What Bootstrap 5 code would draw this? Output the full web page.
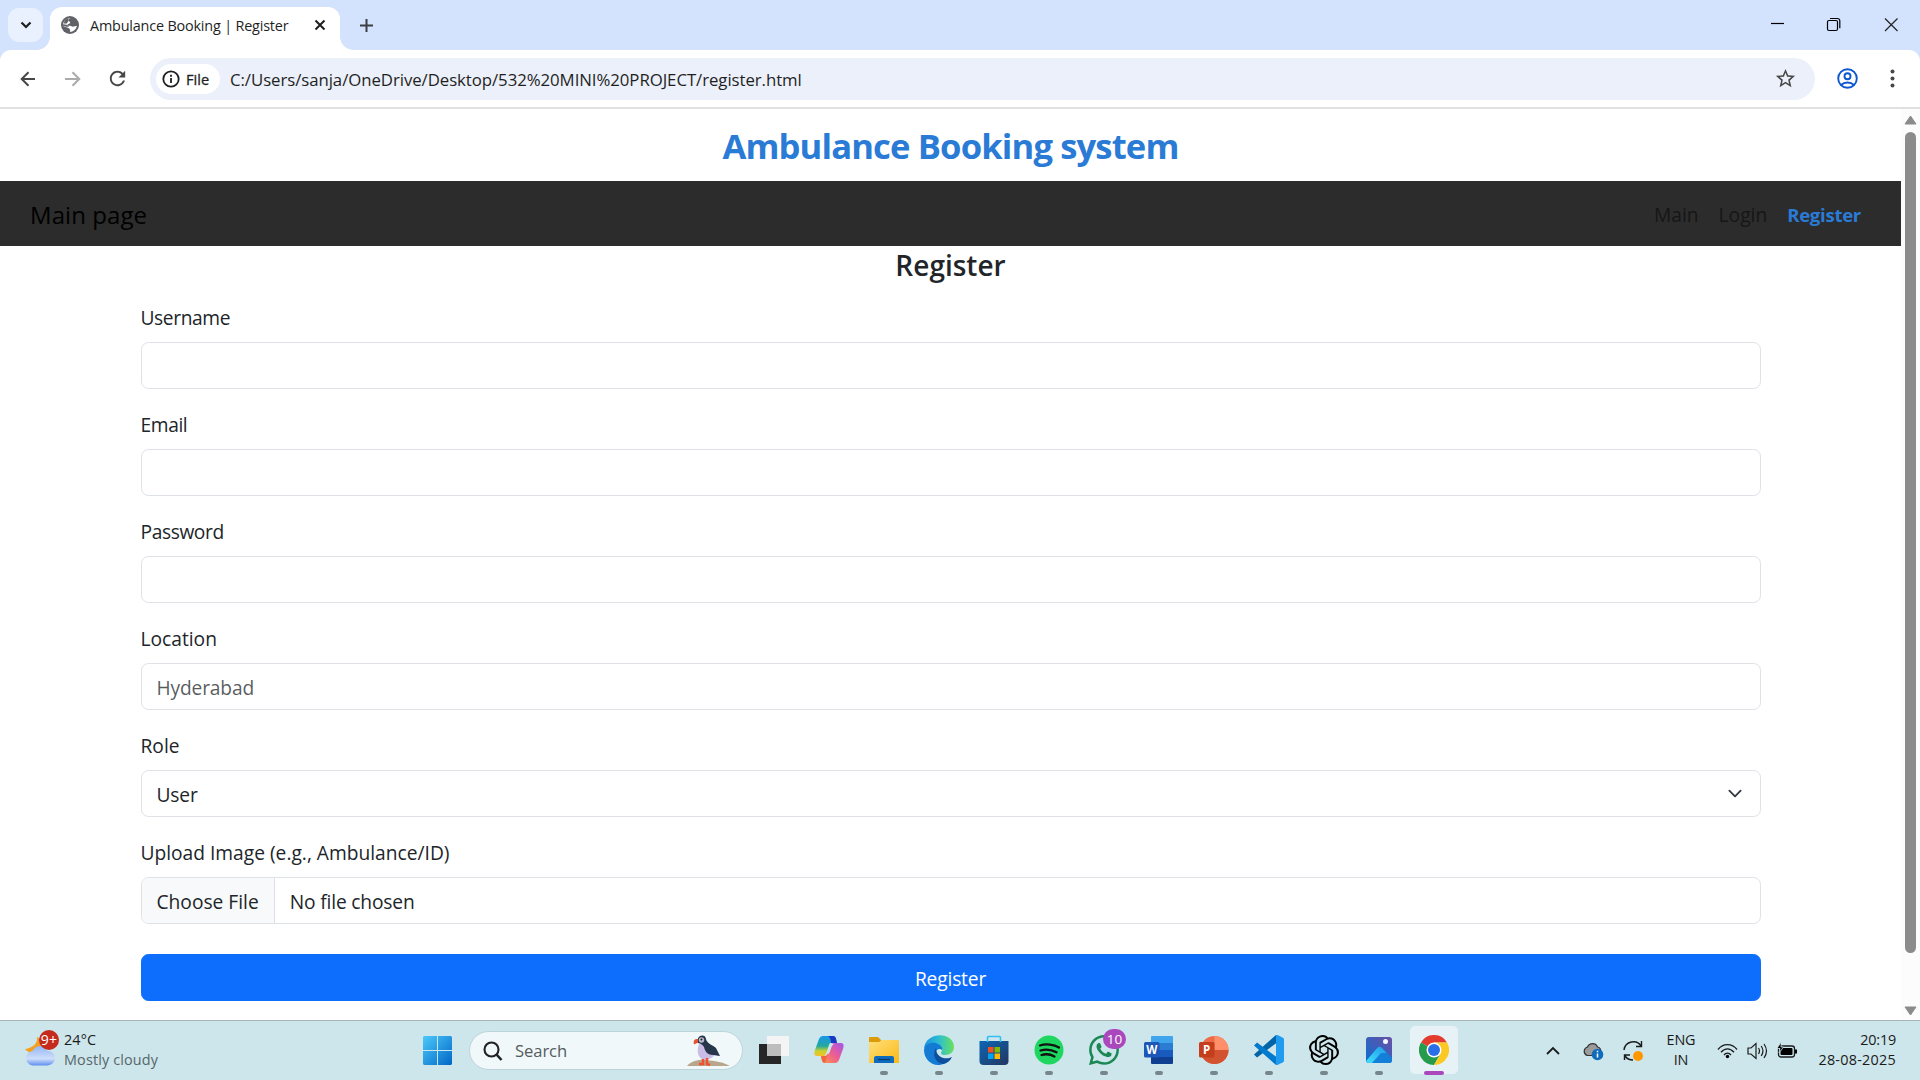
<!DOCTYPE html>
<html lang="en">
<head>
<meta charset="utf-8">
<meta name="viewport" content="width=device-width, initial-scale=1">
<title>Ambulance Booking | Register</title>
<link href="https://cdn.jsdelivr.net/npm/bootstrap@5.3.0/dist/css/bootstrap.min.css" rel="stylesheet">
<style>
html{font-size:20px}
body{font-family:"Open Sans","Noto Sans",sans-serif;font-size:19.2px;line-height:30px;width:1920px;height:1080px;overflow:hidden;background:#fff;color:#212529}
svg{display:block;flex:none}
/* browser tab strip */
.tabstrip{height:50px;background:#d3e2fd}
.tabmenu{width:35px;height:34px;margin:8px 0 0 8px;border-radius:11px;background:#e9f0fe}
.tab-active{position:relative;width:290px;height:43px;margin:7px 0 0 7px;border-radius:12px 12px 0 0;background:#fff;font-size:14.4px;line-height:37px;letter-spacing:-.18px;color:#1f1f1f}
.tab-active::before,.tab-active::after{content:"";position:absolute;bottom:0;width:13px;height:13px}
.tab-active::before{left:-13px;background:radial-gradient(circle at 0 0,transparent 12.5px,#fff 13px)}
.tab-active::after{right:-13px;background:radial-gradient(circle at 100% 0,transparent 12.5px,#fff 13px)}
.tab-active .favicon{margin:9px 11px 0 11px}
.tab-close{margin:12px 14px 0 0}
.tab-new{margin:19px 0 0 19.5px}
.winbuttons{margin-right:22px}
.toolbar-wrap{background:#d3e2fd}
.toolbar{height:59px;background:#fff;border-radius:11px 11px 0 0;border-bottom:2px solid #e0e0e0}
.nav-back{margin-left:20px}
.nav-forward{margin-left:29px}
.nav-reload{margin-left:25px}
.profile{margin:0 32px 0 22px}
.omnibox{width:1665px;height:42px;border-radius:21px;background:#ebf0fa;margin-left:21px;padding:0 18px 0 6px}
.filechip{width:64px;height:30px;border-radius:15px;background:#fff;font-size:14.6px;font-weight:500;color:#1f1f1f;padding-left:6px;gap:6px;-webkit-text-stroke:.3px #1f1f1f}
.url{font-size:16.8px;letter-spacing:-.06px;color:#1f1f1f;margin-left:10px;padding-top:2px}
/* page */
.viewport{height:911px}
.doc{width:1901px}
.pagetitle{height:72px;line-height:74px;font-size:34.6px;letter-spacing:-.85px;font-weight:700;color:#2a7bd6;margin:0;text-align:center}
.mainnav{height:65px;background:#2c2c2c;padding:2px 30px 0}
.mainnav .navbar-brand{font-size:24px;letter-spacing:.08px;color:#000;padding:0;margin:0}
.mainnav .nav-link{color:#161616;padding:0 10px;font-size:19.2px;letter-spacing:0}
.mainnav .nav-link.active{color:#2a7bd6;font-weight:700;font-size:18.6px;letter-spacing:-.3px}
.formwrap{width:1650px;max-width:none}
.formtitle{font-size:28px;line-height:36px;font-weight:600;letter-spacing:0;margin:1px 0 19px;text-align:center}
.form-label{display:block;line-height:32px;margin-bottom:8px;letter-spacing:-.4px}
.form-label.wide{letter-spacing:0}
.form-control,.form-select,.btn{font-size:19.2px;line-height:30px;height:47px;padding-top:8.5px;padding-bottom:6.5px;border-radius:7.5px;letter-spacing:-.16px}
.form-control::file-selector-button{padding-top:8.5px;padding-bottom:6.5px;margin-top:-8.5px;margin-bottom:-6.5px}
.form-select{background-size:20px 15px}
.upload{margin-bottom:30px}
.scroller{width:19px;background:#fcfcfc;padding:6px 0 4px}
.thumb{width:11px;height:821px;border-radius:6px;background:#8b8b8b;margin-top:7px}
/* taskbar */
.taskbar{height:60px;border-top:1px solid #a6b4ba;background:#cde6eb;font-size:14.4px;line-height:20px;color:#1b1b1b}
.weather{width:410px;padding:0 0 2px 25px;letter-spacing:.14px}
.weather .sky{color:#56656a}
.startbtn{margin-left:13px}
.app{position:relative;width:55px;height:59px;padding-top:14px}
.app::after{content:"";width:8px;height:4px;border-radius:2px;background:#76868a;position:absolute;left:23.5px;bottom:5px}
.app.idle::after{display:none}
.app.current::before{content:"";position:absolute;left:3.5px;top:5px;width:48px;height:48px;border-radius:5px;background:#e7f2f7}
.app.current::after{width:20px;left:17.5px;background:#ab47bc}
.app svg{position:relative}
.app .badged{margin:-8px -10px 0 0}
.searchbox{flex:none;width:274px;height:39px;border-radius:20px;background:#f0f8fa;border:1px solid #bdd3da;margin:0 3px 0 17px;padding:0 12px 0 13px;font-size:16.6px;letter-spacing:-.08px;color:#555c60}
.searchbox span{margin-left:12px}
.tray{margin-right:24px}
.t-cloud{margin-left:22px}
.t-sync{margin-left:19px}
.t-lang{margin-left:22px;width:30px;letter-spacing:-.15px}
.t-wifi{margin-left:21px}
.t-icon{margin-left:9px}
.t-clock{margin-left:16px;width:82px}
.t-clock .hm{letter-spacing:-.2px}
.t-clock .dmy{letter-spacing:.25px}
.t-lang,.t-clock{padding-bottom:1px}
</style>
</head>
<body class="d-flex flex-column">
<header>
  <div class="tabstrip d-flex">
    <div class="tabmenu d-flex align-items-center justify-content-center"><svg width="14" height="14" viewBox="0 0 14 14"><path d="M2.500 4.500 7 9l4.500-4.500" fill="none" stroke="#1f1f1f" stroke-width="2.200"/></svg></div>
    <div class="tab-active d-flex"><svg class="favicon" width="18" height="18" viewBox="0 0 18 18"><circle cx="9" cy="9" r="9" fill="#5f6368"/><path d="M9.500 2c-1.300.8-2.300 1.300-2.300 2.400 0 1.200 2 .8 2 2 0 1.400-2 1-2.600 2.100-.4 1 .8 1.200 2.200 1.200 1.600 0 1.900 1 3.200 1 1.300 0 2-.6 3.900-.6-.9 3.500-3.900 5.900-7 6 .2-1.700.6-2.300-.5-3.300C6.800 11.300 4.300 11 2 10 1.500 6 5 2 9.500 2z" fill="#fff"/><path d="M2 8.200c2.400.2 4.800.2 6 2.100-.9 1.100-3.300.1-5.900-.3zM7.500 2 4 4 2.500 7.500h3.300L7 5.500z" fill="#5f6368"/></svg><span>Ambulance Booking | Register</span>
      <svg class="tab-close ms-auto" width="12" height="12" viewBox="0 0 12 12"><path d="m1.500 1.500 9 9m0-9-9 9" stroke="#1f1f1f" stroke-width="2"/></svg></div>
    <svg class="tab-new" width="13" height="13" viewBox="0 0 13 13"><path d="M6.500 0v13M0 6.500h13" stroke="#3c3f43" stroke-width="2"/></svg>
    <div class="winbuttons ms-auto"><svg width="128" height="40" viewBox="0 0 128 40"><path d="M1 23.500h13" stroke="#000" stroke-width="1.200"/><rect x="57.500" y="20.500" width="10" height="10" rx="1.500" fill="none" stroke="#000" stroke-width="1.200"/><path d="M60 18.500h7.500a2.300 2.300 0 0 1 2.300 2.300v7.500" fill="none" stroke="#000" stroke-width="1.200"/><path d="m115 18.500 12.500 12.500m0-12.500L115 31" stroke="#222" stroke-width="1.200"/></svg></div>
  </div>
  <div class="toolbar-wrap"><div class="toolbar d-flex align-items-center">
    <svg class="nav-back" width="16" height="16" viewBox="0 0 16 16"><path d="M15 8H2M8.500 1.200 1.700 8l6.800 6.800" fill="none" stroke="#474747" stroke-width="2"/></svg>
    <svg class="nav-forward" width="16" height="16" viewBox="0 0 16 16"><path d="M0 8h14M7.500 1.200 14.300 8l-6.800 6.800" fill="none" stroke="#ababab" stroke-width="2"/></svg>
    <svg class="nav-reload" width="23" height="23" viewBox="0 0 24 24"><path fill="#474747" d="M17.650 6.350C16.200 4.900 14.210 4 12 4c-4.420 0-7.990 3.580-7.990 8s3.570 8 7.990 8c3.730 0 6.840-2.550 7.730-6h-2.080c-.82 2.330-3.040 4-5.650 4-3.310 0-6-2.690-6-6s2.690-6 6-6c1.660 0 3.140.69 4.220 1.780L13 11h7V4l-2.350 2.350z"/></svg>
    <div class="omnibox d-flex align-items-center">
      <div class="filechip d-flex align-items-center"><svg width="18" height="18" viewBox="0 0 18 18"><circle cx="9" cy="9" r="7.700" fill="none" stroke="#1f1f1f" stroke-width="1.800"/><path d="M9 8v5M9 4.800v1.900" stroke="#1f1f1f" stroke-width="1.800"/></svg><span>File</span></div>
      <span class="url">C:/Users/sanja/OneDrive/Desktop/532%20MINI%20PROJECT/register.html</span>
      <svg class="ms-auto" width="23" height="23" viewBox="0 0 24 24"><path fill="#474747" d="M22 9.240l-7.190-.62L12 2 9.190 8.630 2 9.240l5.460 4.730L5.820 21 12 17.270 18.180 21l-1.630-7.030L22 9.240zM12 15.400l-3.760 2.270 1-4.280-3.320-2.880 4.380-.38L12 6.100l1.710 4.040 4.380.38-3.320 2.880 1 4.280L12 15.400z"/></svg>
    </div>
    <svg class="profile" width="21" height="21" viewBox="0 0 21 21" fill="none" stroke="#0b57d0" stroke-width="1.900"><circle cx="10.500" cy="10.500" r="9.300"/><circle cx="10.500" cy="8.300" r="3"/><path d="M4 17c3.500-3.300 9.500-3.300 13 0"/></svg>
    <svg width="5" height="19" viewBox="0 0 5 19" fill="#474747"><circle cx="2.500" cy="2.500" r="2"/><circle cx="2.500" cy="9.500" r="2"/><circle cx="2.500" cy="16.500" r="2"/></svg>
  </div></div>
</header>
<div class="viewport d-flex">
  <main class="doc">
    <h1 class="pagetitle">Ambulance Booking system</h1>
    <nav class="mainnav d-flex align-items-center justify-content-between">
      <a class="navbar-brand" href="#">Main page</a>
      <ul class="nav"><li><a class="nav-link" href="#">Main</a></li><li><a class="nav-link" href="#">Login</a></li><li><a class="nav-link active" href="#">Register</a></li></ul>
    </nav>
    <div class="container formwrap">
      <h2 class="formtitle">Register</h2>
      <form>
        <div class="mb-3"><label class="form-label">Username</label><input class="form-control" type="text"></div>
        <div class="mb-3"><label class="form-label">Email</label><input class="form-control" type="email"></div>
        <div class="mb-3"><label class="form-label">Password</label><input class="form-control" type="password"></div>
        <div class="mb-3"><label class="form-label wide">Location</label><input class="form-control" type="text" placeholder="Hyderabad"></div>
        <div class="mb-3"><label class="form-label wide">Role</label><select class="form-select"><option>User</option></select></div>
        <div class="upload"><label class="form-label wide">Upload Image (e.g., Ambulance/ID)</label><input class="form-control" type="file"></div>
        <button type="button" class="btn btn-primary w-100">Register</button>
      </form>
    </div>
  </main>
  <div class="scroller d-flex flex-column align-items-center">
    <svg width="13" height="10" viewBox="0 0 13 10"><path d="M6.500 1 12 9H1z" fill="#8b8b8b" stroke="#8b8b8b" stroke-linejoin="round"/></svg>
    <div class="thumb"></div>
    <svg class="mt-auto" width="13" height="10" viewBox="0 0 13 10"><path d="M6.500 9 12 1H1z" fill="#8b8b8b" stroke="#8b8b8b" stroke-linejoin="round"/></svg>
  </div>
</div>
<footer class="taskbar d-flex align-items-center">
  <div class="weather d-flex align-items-center">
    <svg width="39" height="40" viewBox="0 0 39 40"><defs><linearGradient id="cl" x1="0" y1="0" x2="0" y2="1"><stop offset="0" stop-color="#93b4f5"/><stop offset=".65" stop-color="#cfdffa"/><stop offset="1" stop-color="#5f8ef0"/></linearGradient></defs><path d="M12 7c1 6-4 11-12 12 3 4 8 5 14 3l4-12z" fill="#f5a01e"/><path d="M7.500 35.500a7.300 7.300 0 0 1 0-14.500q3-5 7.500-5t7.500 4.700a7.300 7.300 0 0 1 0 14.800z" fill="url(#cl)"/><circle cx="24" cy="10" r="10" fill="#c42b1c"/><text x="24" y="15" font-size="14" fill="#fff" text-anchor="middle">9+</text></svg>
    <div><div>24°C</div><div class="sky">Mostly cloudy</div></div>
  </div>
  <svg class="startbtn" width="29" height="29" viewBox="0 0 29 29"><defs><linearGradient id="wn" gradientUnits="userSpaceOnUse" x1="0" y1="0" x2="29" y2="29"><stop offset="0" stop-color="#4cc9fb"/><stop offset="1" stop-color="#0067c6"/></linearGradient></defs><path d="M1 0h13v14H0V1zM15 0h13l1 1v13H15zM0 15h14v14H1l-1-1zM15 15h14v13l-1 1H15z" fill="url(#wn)"/></svg>
  <div class="searchbox d-flex align-items-center"><svg width="20" height="20" viewBox="0 0 20 20"><circle cx="8.500" cy="8.500" r="7" fill="none" stroke="#222" stroke-width="2.100"/><path d="m13.500 13.500 5 5.500" stroke="#222" stroke-width="2.600"/></svg><span>Search</span>
    <svg class="ms-auto" width="43" height="32" viewBox="0 0 43 32"><path d="M0 31c3-4 11-7 19-6 9 1 17 2 24 6z" fill="#b9a58b"/><path d="M12 9c-2 6-2 12 3 15 5 2 11-1 12-4 0-6-7-8-9-12z" fill="#c9bde6"/><path d="M10.500 5c1-5.500 8-6 8.500-1 1 5 7 6 10 9l4 8-7-1c-5 0-8-3-9-8-1-2-4-4-6.500-4z" fill="#26364b"/><circle cx="14.500" cy="5" r="2.700" fill="#b9bcd0"/><circle cx="14.500" cy="4.500" r="1" fill="#222"/><path d="M11 4C7 4 6 6 7 9.500l4-2z" fill="#e8502e"/><path d="M16 24v5h-4m8-6v6l3 1" stroke="#f05030" stroke-width="2.500" fill="none"/></svg></div>
  <div class="d-flex">
    <div class="app idle d-flex justify-content-center"><svg width="30" height="30" viewBox="0 0 30 30"><path d="M0 9h22v20H0z" fill="#262626"/><path d="M8 1h22v20H8z" fill="#f4f4f4"/><path d="M8 9h14v12H8z" fill="#bdbdbd"/></svg></div>
    <div class="app idle d-flex justify-content-center"><svg width="30" height="30" viewBox="0 0 30 30"><defs><linearGradient id="c1" x1="0" y1="0" x2="0" y2="1"><stop offset="0" stop-color="#1797e8"/><stop offset=".5" stop-color="#23a8a0"/><stop offset=".75" stop-color="#c9d22c"/><stop offset="1" stop-color="#f5bf28"/></linearGradient><linearGradient id="c2" x1="1" y1="0" x2="0" y2="1"><stop offset="0" stop-color="#a355ee"/><stop offset=".5" stop-color="#ec5d93"/><stop offset="1" stop-color="#ff9a44"/></linearGradient></defs><path d="M9 1h10c3 0 3 3 4 7h-6c-2 0-2 2-3 5l-2 6c-1 2-2 2-4 2H3c-3 0-3-3-2-6L5 4c1-2 2-3 4-3z" fill="url(#c1)"/><path d="M14 1h5c3 0 3 3 4 7h-6c0-3-1-6-3-7z" fill="#1737c4"/><path d="M21 28H11c-3 0-3-3-4-7h4c2 0 2-1 3-4l3-7c1-2 2-2 4-2h6c3 0 3 3 2 6l-4 11c-1 2-2 3-4 3z" fill="url(#c2)"/><path d="M13 18.500q1-1 1.500-2.500l1.700-5q.6-1.500 2-1.500-1 1-1.500 2.500l-1.700 5q-.6 1.500-2 1.500z" fill="#cde6eb" stroke="#cde6eb" stroke-width="1.500"/><path d="M7 21h4c2 0 2-1 3-3l-3 10c-3 0-3-3-4-7z" fill="#f3653c"/></svg></div>
    <div class="app d-flex justify-content-center"><svg width="30" height="30" viewBox="0 0 30 30"><defs><linearGradient id="fo" x1="0" y1="0" x2="1" y2="1"><stop offset="0" stop-color="#ffe07a"/><stop offset="1" stop-color="#fbb917"/></linearGradient></defs><path d="M0 3q0-1 1-1h8l3 3v6H0z" fill="#dd9a09"/><path d="M0 7h10l3-2h16q1 0 1 1v22H0z" fill="url(#fo)"/><path d="M5 28v-5q0-2 2-2h16q2 0 2 2v5z" fill="#0f6cbd"/><path d="M9 24.500h12" stroke="#083d73" stroke-width="1.300"/></svg></div>
    <div class="app d-flex justify-content-center"><svg width="30" height="30" viewBox="0 0 30 30"><defs><linearGradient id="e1"><stop offset="0" stop-color="#1b8fe0"/><stop offset=".5" stop-color="#2ebfd0"/><stop offset="1" stop-color="#6ae05a"/></linearGradient></defs><path d="M0 14C1-4 30-4 30 12c0 5-4 8-9 8-4 0-5-2-3-4 2-8-12-9-18-2z" fill="url(#e1)"/><path d="M0 15c1-7 10-9 14-6 3 1 5 4 4 6-4-3-9 2-4 8 4 4 10 3 13 0-3 5-8 7-13 7C6 30 0 23 0 15z" fill="#137bd4"/><path d="M12 13c-4 6-1 15 7 16 4-1 7-3 9-7-6 3-16 1-16-9z" fill="#0d4f9c"/></svg></div>
    <div class="app d-flex justify-content-center"><svg width="30" height="30" viewBox="0 0 30 30"><defs><linearGradient id="st" x1="0" y1="0" x2="1" y2="1"><stop offset="0" stop-color="#0b66b4"/><stop offset="1" stop-color="#24365f"/></linearGradient></defs><path d="M.5 6h29v20q0 4-4 4h-21q-4 0-4-4z" fill="url(#st)"/><path d="M8.500 7V3q0-1.500 1-1.500h11q1 0 1 1.500v4" fill="none" stroke="#30c0f5" stroke-width="1.600"/><path d="M9 12h5.500v5.500H9z" fill="#f25022"/><path d="M15.500 12H21v5.500h-5.500z" fill="#7fba00"/><path d="M9 18.500h5.500V24H9z" fill="#00a4ef"/><path d="M15.500 18.500H21V24h-5.500z" fill="#ffb900"/></svg></div>
    <div class="app d-flex justify-content-center"><svg width="30" height="30" viewBox="0 0 30 30"><circle cx="15" cy="15" r="14.500" fill="#1ed760"/><path d="M6 10.500c6-2 14-1 19 2M6.500 15.500c5-1.500 11-1 16 1.800M7.500 20c4-1.200 9-.8 13 1.500" fill="none" stroke="#111" stroke-width="2.300" stroke-linecap="round"/></svg></div>
    <div class="app d-flex justify-content-center"><svg class="badged" width="42" height="38" viewBox="0 0 42 38"><g transform="translate(1 8) scale(1.88)"><path fill="#1b8755" d="M13.601 2.326A7.850 7.850 0 0 0 7.994 0C3.627 0 .068 3.558.064 7.926c0 1.399.366 2.760 1.057 3.965L0 16l4.204-1.102a7.900 7.900 0 0 0 3.790.965h.004c4.368 0 7.926-3.558 7.930-7.930A7.900 7.900 0 0 0 13.600 2.326zM7.994 14.521a6.600 6.600 0 0 1-3.356-.92l-.24-.144-2.494.654.666-2.433-.156-.251a6.560 6.560 0 0 1-1.007-3.505c0-3.626 2.957-6.584 6.591-6.584a6.560 6.560 0 0 1 4.660 1.931 6.560 6.560 0 0 1 1.928 4.660c-.004 3.639-2.961 6.592-6.592 6.592m3.615-4.934c-.197-.099-1.170-.578-1.353-.646-.182-.065-.315-.099-.445.099-.133.197-.513.646-.627.775-.114.133-.232.148-.43.050-.197-.1-.836-.308-1.592-.985-.59-.525-.985-1.175-1.103-1.372-.114-.198-.011-.304.088-.403.087-.088.197-.232.296-.346.1-.114.133-.198.198-.33.065-.134.034-.248-.015-.347-.05-.099-.445-1.076-.612-1.470-.16-.389-.323-.335-.445-.34-.114-.007-.247-.007-.38-.007a.73.730 0 0 0-.529.247c-.182.198-.691.677-.691 1.654s.71 1.916.81 2.049c.098.133 1.394 2.132 3.383 2.992.47.205.84.326 1.129.418.475.152.904.129 1.246.08.38-.058 1.171-.48 1.338-.943.164-.464.164-.86.114-.943-.049-.084-.182-.133-.38-.232"/></g><rect x="15" y="2" width="23" height="20" rx="10" fill="#ab47bc"/><text x="26.500" y="17" font-size="13.500" fill="#fff" text-anchor="middle">10</text></svg></div>
    <div class="app d-flex justify-content-center"><svg width="30" height="30" viewBox="0 0 30 30"><path d="M7 2q0-1 1-1h20q1 0 1 1v6H7z" fill="#41a5ee"/><path d="M7 8h22v7H7z" fill="#2b7cd3"/><path d="M7 15h22v7H7z" fill="#185abd"/><path d="M7 22h22v6q0 1-1 1H8q-1 0-1-1z" fill="#103f91"/><rect y="7" width="15.500" height="15.500" rx="1.500" fill="#1d57b8"/><text x="7.700" y="18.700" font-size="11.500" font-weight="700" fill="#fff" text-anchor="middle">W</text></svg></div>
    <div class="app d-flex justify-content-center"><svg width="30" height="30" viewBox="0 0 30 30"><circle cx="15.500" cy="15" r="14" fill="#ed6c47"/><path d="M15.500 1a14 14 0 0 1 14 14h-14z" fill="#ff8f6b"/><path d="M1.500 15h28a14 14 0 0 1-28 0z" fill="#d35230"/><rect y="7" width="15.500" height="15.500" rx="1.500" fill="#c43e1c"/><text x="7.700" y="18.700" font-size="11.500" font-weight="700" fill="#fff" text-anchor="middle">P</text></svg></div>
    <div class="app d-flex justify-content-center"><svg width="30" height="30" viewBox="0 0 30 30"><path d="M22 0 0 19.500l3 3L22.500 8z" fill="#0065a9"/><path d="M22 30 0 10.500l3-3L22.500 22z" fill="#007acc"/><path d="M22 0q1-.3 2 .2l5 2.500q1 .5 1 1.500v21.600q0 1-1 1.500l-5 2.500q-1 .4-2 .2z" fill="#1f9cf0"/></svg></div>
    <div class="app d-flex justify-content-center"><svg width="30" height="30" viewBox="0 0 24 24"><path d="M22.282 9.821a5.985 5.985 0 0 0-.516-4.911 6.046 6.046 0 0 0-6.510-2.900A6.065 6.065 0 0 0 4.981 4.182a5.985 5.985 0 0 0-3.998 2.900 6.046 6.046 0 0 0 .743 7.097 5.980 5.980 0 0 0 .511 4.911 6.051 6.051 0 0 0 6.515 2.900A5.985 5.985 0 0 0 13.260 24a6.056 6.056 0 0 0 5.772-4.206 5.989 5.989 0 0 0 3.998-2.900 6.056 6.056 0 0 0-.748-7.073zm-9.022 12.608a4.476 4.476 0 0 1-2.876-1.041l.142-.080 4.778-2.758a.795.795 0 0 0 .393-.681v-6.737l2.020 1.169a.071.071 0 0 1 .038.052v5.583a4.504 4.504 0 0 1-4.495 4.494zm-9.661-4.125a4.471 4.471 0 0 1-.535-3.014l.142.085 4.783 2.758a.771.771 0 0 0 .781 0l5.843-3.369v2.332a.080.080 0 0 1-.033.062L9.740 19.950a4.499 4.499 0 0 1-6.141-1.646zM2.341 7.896a4.485 4.485 0 0 1 2.366-1.973V11.600a.766.766 0 0 0 .388.677l5.814 3.354-2.020 1.169a.076.076 0 0 1-.071 0l-4.830-2.787A4.504 4.504 0 0 1 2.341 7.872zm16.596 3.856L13.104 8.364 15.119 7.200a.076.076 0 0 1 .071 0l4.830 2.791a4.494 4.494 0 0 1-.677 8.104v-5.677a.790.790 0 0 0-.407-.667zm2.011-3.023l-.142-.085-4.774-2.782a.776.776 0 0 0-.785 0L9.409 9.230V6.897a.066.066 0 0 1 .028-.062l4.830-2.787a4.499 4.499 0 0 1 6.680 4.660zM8.307 12.863l-2.020-1.164a.080.080 0 0 1-.038-.057V6.074a4.499 4.499 0 0 1 7.376-3.454l-.142.081L8.704 5.459a.795.795 0 0 0-.393.681zm1.098-2.365l2.602-1.500 2.607 1.500v2.999l-2.597 1.500-2.607-1.500z"/></svg></div>
    <div class="app d-flex justify-content-center"><svg width="30" height="30" viewBox="0 0 30 30"><defs><linearGradient id="ph" x1="0" y1="1" x2="1" y2="0"><stop offset="0" stop-color="#0c6fd0"/><stop offset="1" stop-color="#6b4fa5"/></linearGradient><linearGradient id="pm" x1="0" y1="1" x2="1" y2="0"><stop offset="0" stop-color="#3fe0ff"/><stop offset="1" stop-color="#1f9be8"/></linearGradient></defs><rect x="2" y="2" width="26" height="26" rx="3" fill="url(#ph)"/><path d="M3 26 14 13q2-2 4 0l10 10v2q0 3-3 3H5q-2 0-2-2z" fill="#137fd8"/><path d="M2.500 25.500 13.500 12.800q2-2.200 4.200 0l4.800 5.200H17L8 28H5q-2.500 0-2.500-2.500z" fill="url(#pm)"/><circle cx="21.500" cy="6.500" r="2.500" fill="#f3f6ff"/></svg></div>
    <div class="app current d-flex justify-content-center"><svg width="30" height="30" viewBox="0 0 30 30"><path d="M15 15 2 7.500A15 15 0 0 1 28 7.500H15z" fill="#e33b2e"/><path d="M15 15 2 7.500A15 15 0 0 0 15 30l6.500-11.250z" fill="#269b4b"/><path d="M15 7.500h13A15 15 0 0 1 15 30l6.500-11.250z" fill="#fcc822"/><circle cx="15" cy="15" r="7.500" fill="#fff"/><circle cx="15" cy="15" r="6" fill="#2b6fe8"/></svg></div>
  </div>
  <div class="tray d-flex align-items-center ms-auto">
    <svg width="14" height="10" viewBox="0 0 14 10"><path d="m1 8 6-6 6 6" fill="none" stroke="#1b1b1b" stroke-width="1.800"/></svg>
    <svg class="t-cloud" width="22" height="20" viewBox="0 0 22 20"><path d="M5 14.500a4.500 4.500 0 0 1 .5-8.500C7.500 1.500 14 1.500 15.500 6c3 .5 3.500 3 3 5l-4 3.500z" fill="#9b9b9b" stroke="#333" stroke-width="1.200"/><circle cx="15.500" cy="13.500" r="5.800" fill="#0f6cbd"/><path d="M15.500 12.500v4M15.500 9.800v1.500" stroke="#fff" stroke-width="1.500"/></svg>
    <svg class="t-sync" width="21" height="22" viewBox="0 0 21 22"><path d="M1 10C2 1 14-1 18 6M18.500 1v5.500H13M1.500 20v-5H7M2 16c2 3 5 4 8 4" fill="none" stroke="#1b1b1b" stroke-width="1.400"/><circle cx="15" cy="16" r="5" fill="#ff9800"/></svg>
    <div class="t-lang text-center"><div>ENG</div><div>IN</div></div>
    <svg class="t-wifi" width="21" height="16" viewBox="0 0 21 16"><path d="M1 6.500c5-6.500 14-6.500 19 0M4 9.300c4-4.500 9-4.500 13 0M7 12c2-2.500 5-2.500 7 0" fill="none" stroke="#1b1b1b" stroke-width="1.300"/><circle cx="10.500" cy="13.500" r="1.700"/></svg>
    <svg class="t-icon" width="21" height="18" viewBox="0 0 21 18"><path d="M1 6v6h3l5 4.500v-15L4 6zM11.500 6q2 3 0 6M14.200 4q3.500 5 0 10M17 2q5 7 0 14" fill="none" stroke="#1b1b1b" stroke-width="1.200"/></svg>
    <svg class="t-icon" width="21" height="17" viewBox="0 0 21 17"><rect x="1.500" y="4" width="16" height="11" rx="2.500" fill="none" stroke="#1b1b1b" stroke-width="1.300"/><rect x="3.500" y="6" width="12" height="7" rx="1"/><path d="M18 7.500h2v4h-2z"/><path d="M4 0 0 6.500h3L2 11l4.500-6H4z" stroke="#cde6eb" stroke-width=".8"/></svg>
    <div class="t-clock text-end"><div class="hm">20:19</div><div class="dmy">28-08-2025</div></div>
  </div>
</footer>
<script src="https://cdn.jsdelivr.net/npm/bootstrap@5.3.0/dist/js/bootstrap.bundle.min.js"></script>
</body>
</html>
